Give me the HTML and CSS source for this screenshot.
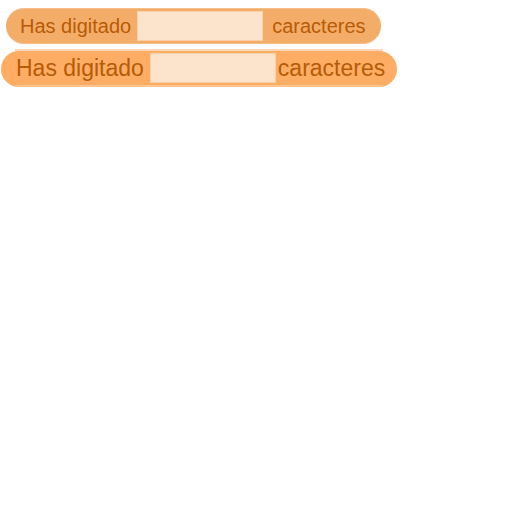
FILE: index.html
```
<!DOCTYPE html>
<html lang="es">
<head>
<meta charset="utf-8">
<title>Contador de caracteres</title>
<link rel="stylesheet" href="styles.css">
</head>
<body>
<main class="counters">
  <div class="pill pill-small">
    <label for="count-a">Has digitado</label>
    <input class="count" id="count-a" type="text">
    <span>caracteres</span>
  </div>
  <div class="pill pill-large">
    <label for="count-b">Has digitado</label>
    <input class="count" id="count-b" type="text">
    <span>caracteres</span>
  </div>
</main>
</body>
</html>
```
FILE: styles.css
```
* {
  box-sizing: border-box;
}

body {
  margin: 0;
  background: #fff;
  color: #b85b06;
  font-family: "Liberation Sans", Arial, Helvetica, sans-serif;
}

.counters {
  display: flex;
  flex-direction: column;
  align-items: flex-start;
  gap: 7px;
  padding-top: 8px;
}

.pill {
  display: flex;
  align-items: center;
  height: 36px;
  border-radius: 18px;
  white-space: nowrap;
}

.pill-small {
  margin-left: 6px;
  padding: 0 15px 0 14px;
  background: #f4ad69;
  border-top: 1px solid #f6bd88;
  border-bottom: 1px solid #f6bd88;
  font-size: 20px;
}

.pill-large {
  position: relative;
  margin-left: 1px;
  padding: 0 12px 2px 15px;
  background: #ffad65;
  font-size: 23px;
}

/* Pale edges above and below the large pill */
.pill-large::before,
.pill-large::after {
  content: "";
  position: absolute;
  left: 14px;
  right: 14px;
  height: 2px;
}

.pill-large::before {
  top: -2px;
  background: #fcd6b8;
}

.pill-large::after {
  bottom: 0;
  background: #ffc490;
}

.count {
  width: 126px;
  height: 30px;
  margin: 0 9px 0 6px;
  padding: 0 6px;
  border: 1px solid #fbd0a6;
  border-radius: 0;
  background: #fce3cc;
  color: inherit;
  font: inherit;
}

.pill-large .count {
  margin-right: 2px;
}
```
